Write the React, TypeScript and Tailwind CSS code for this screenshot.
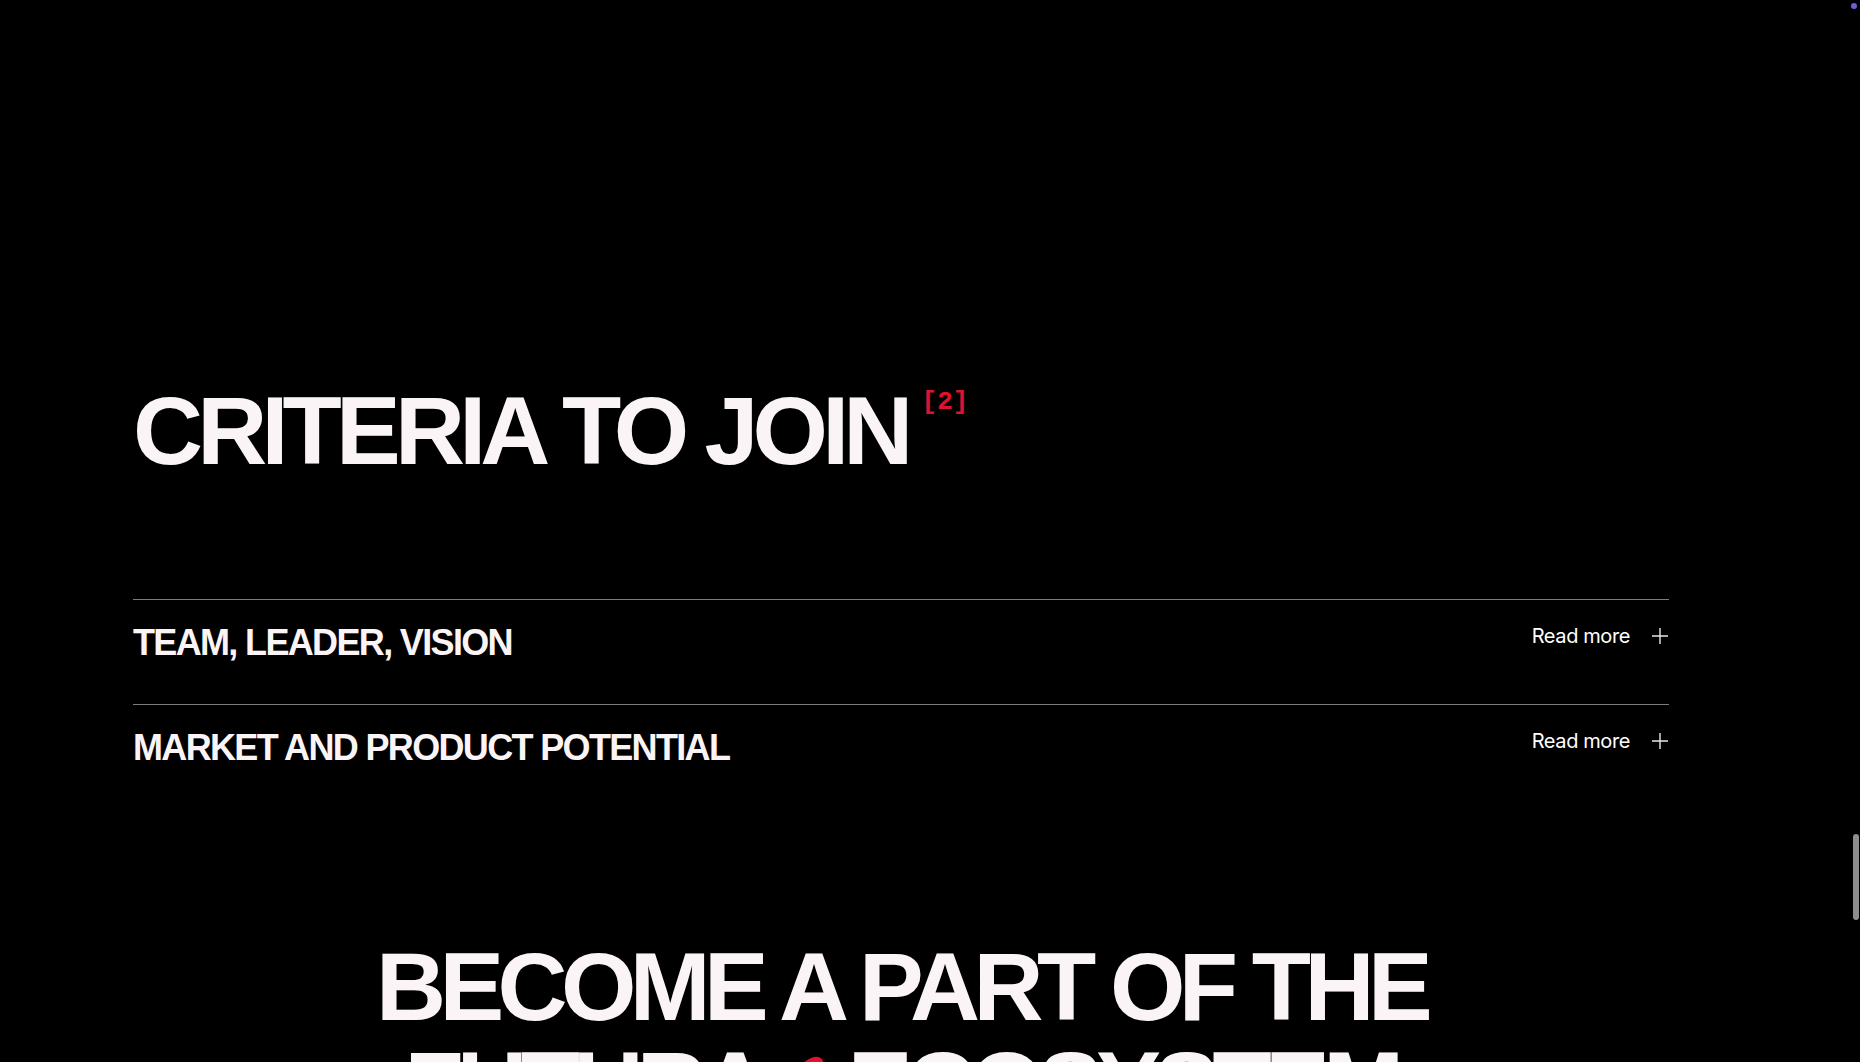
import React from "react";

const display = { fontFamily: '"Liberation Sans", Arial, sans-serif' };

const criteria = ["TEAM, LEADER, VISION", "MARKET AND PRODUCT POTENTIAL"];

const Row = ({ title }: { title: string }) => {
  return (
    <div className="border-t border-[#7c7c7c] flex items-start justify-between pt-[25px] pb-[43px]">
      <h3
        className="text-[36px] leading-none font-bold tracking-[-0.046em] text-[#fbf4f6]"
        style={display}
      >
        {title}
      </h3>
      <button
        type="button"
        className="flex items-center gap-[21px] mt-[1px] text-white text-[20px] leading-none tracking-[-0.02em] font-[Inter]"
      >
        <span>Read more</span>
        <svg width="18" height="18" viewBox="0 0 18 18" fill="none">
          <path d="M9 1v16M1 9h16" stroke="#e8e8e8" strokeWidth="1.4" />
        </svg>
      </button>
    </div>
  );
};

export default function App() {
  return (
    <div className="relative w-full h-[1062px] bg-black overflow-hidden">
      <section className="pl-[133px] w-[1669px] pt-[382px]">
        <div className="flex items-start">
          <h2
            className="text-[97px] leading-none font-bold tracking-[-0.06em] text-[#fbf4f6]"
            style={display}
          >
            CRITERIA TO JOIN
          </h2>
          <span className="ml-[14px] mt-[7px] text-[26px] leading-none font-bold text-[#e1122f] font-['Liberation_Mono']">
            [2]
          </span>
        </div>

        <div className="mt-[120px]">
          {criteria.map((c) => (
            <Row key={c} title={c} />
          ))}
        </div>

        <div className="mt-[128px] text-center">
          <h2
            className="text-[97px] leading-[99px] font-bold tracking-[-0.068em] text-[#fbf4f6]"
            style={display}
          >
            BECOME A PART OF THE
            <br />
            FUTURA
            <svg
              className="inline-block align-top mx-[22px] mt-[14px]"
              width="40"
              height="56"
              viewBox="0 0 40 56"
            >
              <ellipse cx="22" cy="26" rx="12" ry="22" transform="rotate(35 22 26)" fill="#e1122f" />
            </svg>
            ECOSYSTEM
          </h2>
        </div>
      </section>

      {/* scrollbar + corner dot */}
      <div className="absolute right-[1px] top-[834px] w-[6px] h-[86px] rounded-full bg-[#8e8e8e]" />
      <div className="absolute right-[3px] top-[3px] w-[6px] h-[6px] rounded-full bg-[#6b5fd6]" />
    </div>
  );
}
